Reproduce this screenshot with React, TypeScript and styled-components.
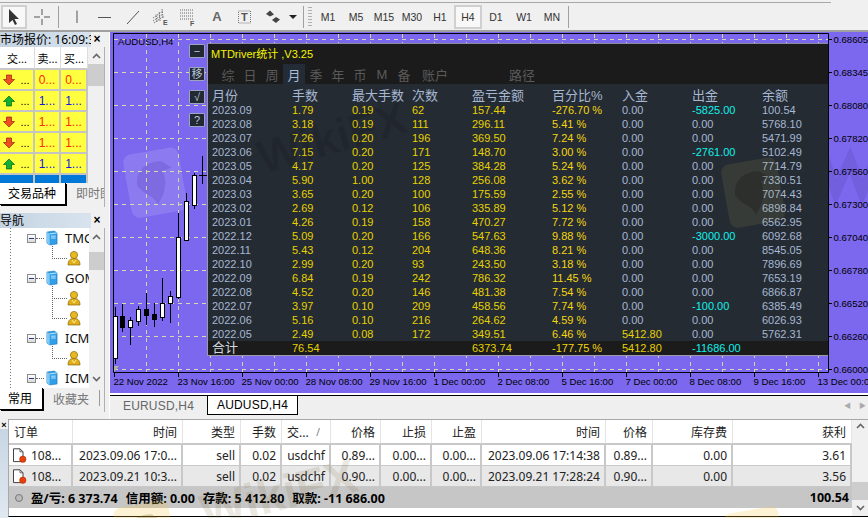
import React from 'react'
import styled, { createGlobalStyle } from 'styled-components'

const UI_FONT = '"Noto Sans", "Noto Sans CJK SC", sans-serif'
const CHART_FONT = '"Liberation Sans", "Noto Sans CJK SC", sans-serif'

const GlobalStyle = createGlobalStyle`
  html, body {
    margin: 0;
    padding: 0;
    background: #f0f0f0;
  }
  * {
    box-sizing: border-box;
  }
`

/* ---------- data ---------- */

const PRICES = [
  ['0.68605', 39], ['0.68345', 72], ['0.68080', 105], ['0.67820', 138], ['0.67560', 171], ['0.67300', 204],
  ['0.67040', 237], ['0.66780', 270], ['0.66520', 303], ['0.66260', 336], ['0.66000', 369],
] as const

const TIMES = [
  '22 Nov 2022', '23 Nov 16:00', '25 Nov 00:00', '28 Nov 08:00', '29 Nov 16:00', '1 Dec 00:00',
  '2 Dec 08:00', '5 Dec 16:00', '7 Dec 00:00', '8 Dec 08:00', '9 Dec 16:00', '13 Dec 00:00',
]

// x, wick top, wick bottom, body top, body bottom, bullish
const CANDLES: [number, number, number, number, number, boolean][] = [
  [115, 307, 364, 316, 358, true],
  [122, 304, 332, 316, 327, false],
  [130, 317, 345, 320, 327, true],
  [138, 306, 326, 309, 321, true],
  [146, 293, 325, 309, 315, false],
  [154, 303, 327, 314, 319, false],
  [162, 278, 321, 303, 317, true],
  [170, 291, 323, 296, 303, true],
  [178, 213, 299, 237, 297, true],
  [186, 193, 241, 201, 240, true],
  [194, 173, 209, 175, 205, true],
]

const MONTHS = [
  ['2023.09', '1.79', '0.19', '62', '157.44', '-276.70 %', '0.00', '-5825.00', '100.54'],
  ['2023.08', '3.18', '0.19', '111', '296.11', '5.41 %', '0.00', '0.00', '5768.10'],
  ['2023.07', '7.26', '0.20', '196', '369.50', '7.24 %', '0.00', '0.00', '5471.99'],
  ['2023.06', '7.15', '0.20', '171', '148.70', '3.00 %', '0.00', '-2761.00', '5102.49'],
  ['2023.05', '4.17', '0.20', '125', '384.28', '5.24 %', '0.00', '0.00', '7714.79'],
  ['2023.04', '5.90', '1.00', '128', '256.08', '3.62 %', '0.00', '0.00', '7330.51'],
  ['2023.03', '3.65', '0.20', '100', '175.59', '2.55 %', '0.00', '0.00', '7074.43'],
  ['2023.02', '2.69', '0.12', '106', '335.89', '5.12 %', '0.00', '0.00', '6898.84'],
  ['2023.01', '4.26', '0.19', '158', '470.27', '7.72 %', '0.00', '0.00', '6562.95'],
  ['2022.12', '5.09', '0.20', '166', '547.63', '9.88 %', '0.00', '-3000.00', '6092.68'],
  ['2022.11', '5.43', '0.12', '204', '648.36', '8.21 %', '0.00', '0.00', '8545.05'],
  ['2022.10', '2.99', '0.20', '93', '243.50', '3.18 %', '0.00', '0.00', '7896.69'],
  ['2022.09', '6.84', '0.19', '242', '786.32', '11.45 %', '0.00', '0.00', '7653.19'],
  ['2022.08', '4.52', '0.20', '146', '481.38', '7.54 %', '0.00', '0.00', '6866.87'],
  ['2022.07', '3.97', '0.10', '209', '458.56', '7.74 %', '0.00', '-100.00', '6385.49'],
  ['2022.06', '5.16', '0.10', '216', '264.62', '4.59 %', '0.00', '0.00', '6026.93'],
  ['2022.05', '2.49', '0.08', '172', '349.51', '6.46 %', '5412.80', '0.00', '5762.31'],
]

const MONTH_HEAD = ['月份', '手数', '最大手数', '次数', '盈亏金额', '百分比%', '入金', '出金', '余额']
const PANEL_TABS = ['综', '日', '周', '月', '季', '年', '币', 'M', '备']
const TIMEFRAMES = ['M1', 'M5', 'M15', 'M30', 'H1', 'H4', 'D1', 'W1', 'MN']

const QUOTES = [
  { up: false, value: '0...' },
  { up: true, value: '1...' },
  { up: false, value: '1...' },
  { up: false, value: '1...' },
  { up: true, value: '1...' },
]

const ORDER_HEAD = ['订单', '时间', '类型', '手数', '交...', '价格', '止损', '止盈', '时间', '价格', '库存费', '获利']
const ORDERS = [
  ['108...', '2023.09.06 17:0...', 'sell', '0.02', 'usdchf', '0.89...', '0.00...', '0.00...', '2023.09.06 17:14:38', '0.89...', '0.00', '3.61'],
  ['108...', '2023.09.21 10:3...', 'sell', '0.02', 'usdchf', '0.90...', '0.00...', '0.00...', '2023.09.21 17:28:24', '0.90...', '0.00', '3.56'],
]

/* ---------- shell ---------- */

const Page = styled.div`
  width: 868px;
  height: 518px;
  overflow: hidden;
  display: flex;
  flex-direction: column;
  background: #f0f0f0;
  font-family: ${UI_FONT};
  color: #000;
`

const Toolbar = styled.div`
  height: 32px;
  flex: none;
  display: flex;
  align-items: center;
  padding-top: 3px;
  position: relative;
  background: #f0f0f0;
  border-bottom: 2px solid #a0a0a0;
  &::before {
    content: '';
    position: absolute;
    left: 0;
    top: 2px;
    width: 831px;
    height: 1px;
    background: #a8a8a8;
  }
`

const ToolButton = styled.div<{ $pressed?: boolean }>`
  width: 28px;
  height: 24px;
  flex: none;
  display: flex;
  align-items: center;
  justify-content: center;
  ${(p) => p.$pressed && 'border: 2px solid #d0d0d0; background: #f8f8f8; margin-left: 1px; margin-right: 1px; width: 26px;'}
`

const ToolSeparator = styled.div`
  width: 1px;
  height: 22px;
  flex: none;
  margin: 0 4px 0 2px;
  background: #a0a0a0;
`

const Grip = styled.div`
  width: 4px;
  height: 20px;
  flex: none;
  margin-right: 2px;
  background: repeating-linear-gradient(to bottom, #b0b0b0 0 1px, transparent 1px 3px);
`

const TimeButton = styled.div<{ $active?: boolean }>`
  width: 28px;
  height: 24px;
  flex: none;
  display: flex;
  align-items: center;
  justify-content: center;
  font-family: ${CHART_FONT};
  font-size: 10.5px;
  color: #333;
  ${(p) => p.$active && 'border: 2px solid #d0d0d0; background: #f8f8f8;'}
`

const Body = styled.div`
  height: 387px;
  flex: none;
  display: flex;
`

const Sidebar = styled.aside`
  width: 110px;
  flex: none;
  display: flex;
  flex-direction: column;
  padding-right: 4px;
  border-right: 1px solid #fff;
`

const PanelHead = styled.div`
  height: 15px;
  flex: none;
  display: flex;
  align-items: center;
  justify-content: space-between;
  font-size: 12.5px;
  line-height: 15px;
  white-space: nowrap;
  padding-right: 2px;
`

const PanelTitle = styled.span`
  width: 92px;
  overflow: hidden;
  background: linear-gradient(to right, #c4d3e2, #d8e3ee);
  font-size: 12px;
`

const CloseMark = styled.span`
  width: 12px;
  text-align: center;
  font-family: ${CHART_FONT};
  font-size: 12px;
  font-weight: 700;
`

/* ---------- market watch ---------- */

const MarketPanel = styled.section`
  height: 136px;
  flex: none;
  display: grid;
  grid-template-columns: 88px 1fr;
  background: #fff;
  border-right: 1px solid #b0b0b0;
  overflow: hidden;
`

const QuoteTable = styled.div`
  display: grid;
  grid-template-columns: 35px 26px 27px;
  grid-auto-rows: 21px;
  grid-template-rows: 23px;
`

const QuoteHead = styled.div`
  display: flex;
  align-items: center;
  justify-content: center;
  font-size: 11px;
  border-right: 1px solid #dcdcdc;
  border-bottom: 2px solid #c8c8c8;
`

const QuoteCell = styled.div<{ $up?: boolean; $selected?: boolean }>`
  display: flex;
  align-items: center;
  justify-content: center;
  gap: 5px;
  background: ${(p) => (p.$selected ? '#0078d7' : '#ffff40')};
  border-right: 2px solid #c4c4c4;
  border-bottom: 2px solid #c4c4c4;
  color: ${(p) => (p.$up ? '#1414e0' : '#ff2a00')};
  font-family: ${CHART_FONT};
  font-size: 12px;
  font-weight: 400;
`

const Dots = styled.span`
  color: #000;
  font-family: ${CHART_FONT};
  font-size: 11px;
`

const Scroll = styled.div`
  display: flex;
  flex-direction: column;
  justify-content: space-between;
  align-items: center;
  background: #f0f0f0;
  position: relative;
  padding: 6px 0;
`

const ScrollThumb = styled.div<{ $top: number; $height: number }>`
  position: absolute;
  left: 0;
  right: 0;
  top: ${(p) => p.$top}px;
  height: ${(p) => p.$height}px;
  background: #cdcdcd;
`

const SideTabs = styled.div`
  height: 24px;
  flex: none;
  display: flex;
  align-items: flex-start;
  overflow: hidden;
  font-size: 12px;
  background: #f0f0f0;
  border-right: 1px solid #b0b0b0;
`

const SideTab = styled.div<{ $active?: boolean; $divider?: boolean; $w: number }>`
  width: ${(p) => p.$w}px;
  height: ${(p) => (p.$active ? 22 : 20)}px;
  flex: none;
  overflow: hidden;
  white-space: nowrap;
  padding: 1px 0 0 ${(p) => (p.$active ? 8 : 10)}px;
  background: ${(p) => (p.$active ? '#fff' : 'transparent')};
  color: ${(p) => (p.$active ? '#000' : '#777')};
  ${(p) => p.$active && 'border-right: 1px solid #000; border-bottom: 1px solid #000; box-shadow: 1px 1px 0 #000;'}
  ${(p) => p.$divider && 'border-right: 1px solid #999; height: 16px; margin-top: 2px; padding-top: 0;'}
`

const Splitter = styled.div`
  height: 6px;
  flex: none;
`

/* ---------- navigator ---------- */

const NavPanel = styled.section`
  height: 160px;
  flex: none;
  display: grid;
  grid-template-columns: 89px 1fr;
  background: #fff;
  border-right: 1px solid #b0b0b0;
  overflow: hidden;
`

const Tree = styled.div`
  overflow: hidden;
  background-image: repeating-linear-gradient(to bottom, #777 0 1px, transparent 1px 3px);
  background-size: 1px 100%;
  background-position: 10px 0;
  background-repeat: no-repeat;
`

const ServerRow = styled.div`
  height: 20px;
  display: flex;
  align-items: center;
  padding-left: 27px;
  font-size: 13px;
  white-space: nowrap;
  svg {
    flex: none;
  }
`

const UserRow = styled.div<{ $tall?: boolean }>`
  height: 20px;
  position: relative;
  padding-left: 67px;
  display: flex;
  align-items: center;
  &::before {
    content: '';
    position: absolute;
    left: 52px;
    bottom: 9px;
    width: 14px;
    height: ${(p) => (p.$tall ? 30 : 12)}px;
    border-left: 1px dotted #666;
    border-bottom: 1px dotted #666;
  }
`

const MinusBox = styled.span`
  width: 9px;
  height: 9px;
  flex: none;
  border: 1px solid #8a8a8a;
  background: linear-gradient(#fff, #d8d8d8);
  display: flex;
  align-items: center;
  justify-content: center;
  &::after {
    content: '';
    width: 5px;
    height: 1px;
    background: #2a3a80;
  }
`

const Connector = styled.span`
  width: 8px;
  flex: none;
  border-top: 1px dotted #666;
  margin-right: 2px;
`

const ServerName = styled.span`
  flex: none;
  margin-left: 7px;
  color: #111;
`

/* ---------- chart ---------- */

const Workspace = styled.main`
  flex: 1;
  min-width: 0;
  display: flex;
  flex-direction: column;
`

const ChartFrame = styled.div`
  height: 361px;
  flex: none;
  position: relative;
  background: #7b68ee;
  overflow: hidden;
`

const ChartSvg = styled.svg`
  display: block;
  text {
    font-family: ${CHART_FONT};
    font-size: 9.6px;
    fill: #000;
  }
`

const SideButtons = styled.div`
  position: absolute;
  left: 79px;
  top: 12px;
  display: flex;
  flex-direction: column;
  gap: 9px;
`

const PanelButton = styled.div`
  width: 16px;
  height: 14px;
  display: flex;
  align-items: center;
  justify-content: center;
  background: #232932;
  border: 1px solid #9aa6c0;
  border-radius: 1px;
  color: #b8c6da;
  font-size: 11px;
  font-family: ${CHART_FONT};
  line-height: 1;
`

const StatsPanel = styled.section`
  position: absolute;
  left: 97px;
  top: 11px;
  width: 621px;
  height: 313px;
  background: #252b33;
  border-left: 1px solid #9a9aa8;
  border-top: 1px solid #8a8aa0;
  border-bottom: 1px solid #9a9aa8;
  font-family: ${CHART_FONT};
  overflow: hidden;
`

const StatsTop = styled.div`
  height: 40px;
  background: #1b1b1b;
  display: flex;
  flex-direction: column;
`

const StatsTitle = styled.div`
  height: 20px;
  padding: 2px 0 0 3px;
  color: #f4f400;
  font-family: ${CHART_FONT};
  font-size: 11px;
  line-height: 16px;
`

const StatsTabs = styled.div`
  height: 20px;
  display: flex;
  padding-left: 9px;
`

const StatsTab = styled.div<{ $active?: boolean; $gap?: number; $w?: number }>`
  width: ${(p) => p.$w ?? 22}px;
  margin-left: ${(p) => p.$gap ?? 0}px;
  flex: none;
  display: flex;
  align-items: center;
  justify-content: center;
  font-size: 13px;
  color: ${(p) => (p.$active ? '#a8bcd8' : '#5a5a5a')};
  background: ${(p) => (p.$active ? '#232c36' : 'transparent')};
`

const MonthRow = styled.div<{ $head?: boolean; $total?: boolean }>`
  height: ${(p) => (p.$head ? 19 : 14)}px;
  display: grid;
  grid-template-columns: 80px 60px 60px 60px 80px 70px 70px 70px 1fr;
  padding-left: 4px;
  align-items: center;
  font-size: ${(p) => (p.$head ? 13 : 11)}px;
  line-height: 14px;
  white-space: nowrap;
  ${(p) => p.$head && 'padding-top: 5px;'}
  ${(p) => p.$total && 'background: #1b1b1b;'}
`

const MonthCell = styled.span<{ $tone: 'label' | 'value' | 'cash' | 'percent' | 'total' }>`
  font-size: ${(p) => (p.$tone === 'total' ? '13px' : 'inherit')};
  color: ${(p) =>
    ({ label: '#a6b8d2', value: '#e6d200', percent: '#f4d610', cash: '#10f0ea', total: '#d0d8e0' })[p.$tone]};
`

const StatsWatermark = styled.svg`
  position: absolute;
  inset: 0;
  pointer-events: none;
  text {
    font-family: ${CHART_FONT};
    font-weight: 700;
    font-size: 46px;
    fill: rgba(0, 0, 0, 0.1);
  }
`

/* ---------- chart tabs ---------- */

const ChartTabs = styled.div`
  height: 24px;
  flex: none;
  margin-top: 2px;
  display: flex;
  align-items: flex-start;
  background: #efefef;
  border-top: 1px solid #000;
  position: relative;
  font-family: ${CHART_FONT};
  font-size: 12px;
  box-shadow: 0 -2px 0 #fff;
`

const ChartTab = styled.div<{ $active?: boolean; $w: number }>`
  width: ${(p) => p.$w}px;
  height: 19px;
  flex: none;
  display: flex;
  align-items: center;
  justify-content: center;
  letter-spacing: 0.2px;
  color: ${(p) => (p.$active ? '#000' : '#666')};
  background: ${(p) => (p.$active ? '#fff' : 'transparent')};
  ${(p) => p.$active && 'border-left: 1px solid #000; border-right: 1px solid #000; border-bottom: 1px solid #000;'}
`

const TabArrows = styled.div`
  margin-left: auto;
  width: 22px;
  margin-right: 2px;
  height: 18px;
  display: flex;
  align-items: center;
  justify-content: space-between;
  color: #aaa;
  font-size: 7px;
`

/* ---------- terminal ---------- */

const Terminal = styled.section`
  flex: 1;
  min-height: 0;
  display: flex;
  position: relative;
  background: #fff;
`

const TerminalSide = styled.div`
  width: 8px;
  flex: none;
  display: flex;
  justify-content: center;
  background: linear-gradient(to bottom, #f0f0f0 0 10px, #c8d6e4 10px, #e0e8f0);
  font-family: ${CHART_FONT};
  font-size: 9px;
  font-weight: 700;
  line-height: 12px;
`

const TerminalMain = styled.div`
  flex: 1;
  min-width: 0;
  display: flex;
  border-top: 1px solid #a8a8a8;
  border-left: 1px solid #a8a8a8;
  border-bottom: 1px solid #000;
  margin-bottom: 1px;
`

const OrderTable = styled.div`
  width: 843px;
  flex: none;
  position: relative;
`

const OrderRow = styled.div<{ $alt?: boolean; $head?: boolean }>`
  height: ${(p) => (p.$head ? 25 : 21)}px;
  display: grid;
  grid-template-columns: 64px 110px 58px 41px 49px 50px 51px 50px 124px 47px 80px 119px;
  background: ${(p) => (p.$alt ? '#e8e8e8' : '#fff')};
  font-size: 12px;
  color: #222;
  border-bottom: ${(p) => (p.$head ? '2px solid #c8c8c8' : '1px solid #c8c8c8')};
`

const OrderCell = styled.div<{ $left?: boolean; $head?: boolean; $first?: boolean }>`
  display: flex;
  align-items: center;
  justify-content: ${(p) => (p.$left ? 'flex-start' : 'flex-end')};
  gap: 4px;
  white-space: nowrap;
  overflow: hidden;
  padding: ${(p) => (p.$left ? '0 0 0 5px' : p.$head ? '0 5px 0 0' : '0 4px 0 0')};
  border-right: ${(p) => (p.$head ? '1px solid #e4e4e4' : '2px solid #c8c8c8')};
  ${(p) => !p.$head && p.$first && 'padding-left: 3px;'}
`

const SortMark = styled.span`
  margin: 0 10px 0 auto;
  color: #777;
  font-size: 10px;
`

const Summary = styled.div`
  height: 21px;
  display: flex;
  align-items: center;
  background: #c6c6c6;
  font-size: 12.5px;
  font-weight: 700;
  padding: 0 3px 0 6px;
  white-space: nowrap;
`

const SummaryDot = styled.span`
  width: 8px;
  height: 8px;
  margin-right: 8px;
  flex: none;
  border-radius: 50%;
  border: 1px solid #777;
  background: #bbb;
`

const SummaryItem = styled.span`
  margin-right: 8px;
`

const SummaryTotal = styled.span`
  margin-left: auto;
`

const TerminalScroll = styled(Scroll)`
  flex: 1;
  padding: 3px 0 5px;
`

const TerminalWatermark = styled.svg`
  position: absolute;
  left: 0;
  top: 0;
  pointer-events: none;
  text {
    font-family: ${CHART_FONT};
    font-weight: 700;
    font-size: 48px;
    fill: rgba(120, 100, 60, 0.14);
  }
`

/* ---------- drawings ---------- */

function ScrollArrow({ down }: { down?: boolean }) {
  return (
    <svg width="9" height="6" viewBox="0 0 9 6">
      <path d={down ? 'M1 1 L4.5 4.5 L8 1' : 'M1 5 L4.5 1.5 L8 5'} fill="none" stroke="#666" strokeWidth="1.6" />
    </svg>
  )
}

function ArrowIcon({ up }: { up: boolean }) {
  const fill = up ? '#10b030' : '#f05020'
  const edge = up ? '#056018' : '#902010'
  return (
    <svg width="12" height="12" viewBox="0 0 12 12">
      {up ? (
        <path d="M6 1 L11.5 6.5 H8.5 V11 H3.5 V6.5 H.5 Z" fill={fill} stroke={edge} strokeWidth=".7" />
      ) : (
        <path d="M6 11 L11.5 5.5 H8.5 V1 H3.5 V5.5 H.5 Z" fill={fill} stroke={edge} strokeWidth=".7" />
      )}
    </svg>
  )
}

function ServerIcon() {
  return (
    <svg width="12" height="16" viewBox="0 0 13 17">
      <path d="M1 2 L9 1 L12 3 V15 L4 16 L1 14 Z" fill="#2f9fe8" stroke="#1670b8" strokeWidth=".6" />
      <path d="M1 2 L4 4 V16 L1 14 Z" fill="#7fc8f4" />
      <path d="M4 4 L12 3 M5.5 6.5 H10.5 M5.5 8.5 H10.5" stroke="#d8f0ff" strokeWidth=".9" />
    </svg>
  )
}

function UserIcon() {
  return (
    <svg width="14" height="16" viewBox="0 0 14 16">
      <circle cx="7" cy="5" r="3.6" fill="#e8b820" stroke="#8a6a10" strokeWidth=".7" />
      <path d="M1 15 C1 9.5 4 8.5 7 8.5 C10 8.5 13 9.5 13 15 Z" fill="#e0ae18" stroke="#8a6a10" strokeWidth=".7" />
      <path d="M5 10 L7 13 L9 10" fill="none" stroke="#fff2a0" strokeWidth=".9" />
    </svg>
  )
}

function OrderIcon() {
  return (
    <svg width="15" height="15" viewBox="0 0 15 15" style={{ flex: 'none' }}>
      <path d="M1.5 .8 H8 L11 3.8 V13.6 H1.5 Z" fill="#fff" stroke="#444" strokeWidth="1" />
      <path d="M8 .8 V3.8 H11" fill="none" stroke="#444" strokeWidth=".8" />
      <circle cx="10.8" cy="11.2" r="3.2" fill="#e8400c" stroke="#a02800" strokeWidth=".5" />
    </svg>
  )
}

function LogoMark({ x, y, fill, bird }: { x: number; y: number; fill: string; bird: string }) {
  return (
    <g transform={`translate(${x} ${y}) rotate(-10)`}>
      <rect width="56" height="64" rx="8" fill={fill} />
      <path
        d="M10 32 C10 16 24 9 38 12 L47 20 L37 22 C41 30 37 44 27 54 C24 44 15 42 10 32 Z"
        fill={bird}
      />
    </g>
  )
}

function Tools() {
  const s = { stroke: '#555', strokeWidth: 1, fill: 'none' }
  return (
    <>
      <ToolButton $pressed>
        <svg width="14" height="18" viewBox="0 0 14 18">
          <path d="M2 1 V15 L5.5 12 L8 17 L10 16 L7.5 11 H12 Z" fill="#333" />
        </svg>
      </ToolButton>
      <ToolButton>
        <svg width="18" height="18" viewBox="0 0 18 18">
          <path d="M9 1 V7 M9 11 V17 M1 9 H7 M11 9 H17" {...s} />
        </svg>
      </ToolButton>
      <ToolSeparator />
      <ToolButton>
        <svg width="14" height="16" viewBox="0 0 14 16">
          <path d="M7 1.5 V14" {...s} />
        </svg>
      </ToolButton>
      <ToolButton>
        <svg width="16" height="14" viewBox="0 0 16 14">
          <path d="M1 7.5 H14" {...s} />
        </svg>
      </ToolButton>
      <ToolButton>
        <svg width="16" height="16" viewBox="0 0 16 16">
          <path d="M2 15 L14 2" {...s} />
        </svg>
      </ToolButton>
      <ToolButton>
        <svg width="20" height="18" viewBox="0 0 20 18">
          <path d="M2 10 L12 3 M2 13 L12 6 M3 15 L13 8 M6 14 L5 6 M9 13 L8 3 M12 10 L11 1" stroke="#666" strokeWidth=".9" strokeDasharray="1.5 1" fill="none" />
          <text x="12" y="17" fontSize="7" fontFamily="Liberation Sans" fontWeight="700" fill="#555">E</text>
        </svg>
      </ToolButton>
      <ToolButton>
        <svg width="20" height="18" viewBox="0 0 20 18">
          <path d="M1 2 H14 M1 5 H14 M1 8 H14 M1 11 H14" stroke="#666" strokeDasharray="1 1" fill="none" />
          <text x="11" y="17.5" fontSize="7" fontFamily="Liberation Sans" fontWeight="700" fill="#555">F</text>
        </svg>
      </ToolButton>
      <ToolButton>
        <span style={{ fontFamily: CHART_FONT, fontWeight: 700, fontSize: 13, color: '#666' }}>A</span>
      </ToolButton>
      <ToolButton>
        <svg width="16" height="16" viewBox="0 0 16 16">
          <rect x="1.5" y="2" width="12" height="12" fill="none" stroke="#777" strokeDasharray="1 1" />
          <text x="4" y="12" fontSize="11" fontFamily="Liberation Sans" fontWeight="700" fill="#555">T</text>
        </svg>
      </ToolButton>
      <ToolButton>
        <svg width="16" height="14" viewBox="0 0 16 14">
          <path d="M5 0.5 L9 4.5 L5 6.5 L1 4 Z" fill="#444" />
          <path d="M11 7 L15 9.5 L11 13 L7 10 Z" fill="#444" />
        </svg>
      </ToolButton>
    </>
  )
}

function Chart() {
  const axisX = 828
  const axisY = 372
  return (
    <ChartSvg width="758" height="361" viewBox="110 32 758 361">
      <LogoMark x={122} y={156} fill="rgba(255,255,255,.13)" bird="rgba(90,70,190,.28)" />
      <path d="M822 152 L836 192 L850 160 L862 192 L880 150" fill="none" stroke="rgba(60,40,130,.14)" strokeWidth="10" />
      {PRICES.map(([, y]) => (
        <line key={y} x1="114" x2={axisX} y1={y + 0.5} y2={y + 0.5} stroke="#dcd9b0" strokeDasharray="4 4" />
      ))}
      {Array.from({ length: 22 }, (_, i) => 146 + i * 32).map((x) => (
        <line key={x} x1={x + 0.5} x2={x + 0.5} y1="34" y2={axisY} stroke="#d6d4a0" strokeDasharray="4 4" />
      ))}
      {CANDLES.map(([x, top, bottom, bodyTop, bodyBottom, up]) => (
        <g key={x}>
          <line x1={x + 0.5} x2={x + 0.5} y1={top} y2={bottom} stroke="#000" />
          <rect
            x={x - 1.5}
            y={bodyTop + 0.5}
            width="4"
            height={bodyBottom - bodyTop}
            fill={up ? '#fff' : '#000'}
            stroke="#000"
          />
        </g>
      ))}
      <path d="M202.5 156 V184 M199 175.5 H207" stroke="#000" fill="none" />
      <path d={`M113.5 33.5 H${axisX}.5 V${axisY}.5 H113.5 Z`} fill="none" stroke="#000" />
      <path d="M114 372 V366 H119 Z" fill="#b0b0a0" />
      {PRICES.map(([label, y]) => (
        <g key={label}>
          <line x1={axisX} x2={axisX + 4} y1={y + 0.5} y2={y + 0.5} stroke="#000" />
          <text x="833.5" y={y + 3.5}>{label}</text>
        </g>
      ))}
      {TIMES.map((label, i) => (
        <g key={label}>
          <line x1={178.5 + (i - 1) * 64} x2={178.5 + (i - 1) * 64} y1={axisY} y2={axisY + 5} stroke="#000" />
          <text x={113.5 + i * 64} y="385">{label}</text>
        </g>
      ))}
      <text x="118" y="45">AUDUSD,H4</text>
    </ChartSvg>
  )
}

function StatsTable() {
  return (
    <StatsPanel>
      <StatsWatermark width="621" height="313" viewBox="0 0 621 313">
        <text x="55" y="130" transform="rotate(-16 55 130)">WikiFX</text>
        <LogoMark x={512} y={122} fill="rgba(180,170,90,.13)" bird="rgba(0,0,0,.2)" />
      </StatsWatermark>
      <StatsTop>
        <StatsTitle>MTDriver统计 ,V3.25</StatsTitle>
        <StatsTabs>
          {PANEL_TABS.map((t) => (
            <StatsTab key={t} $active={t === '月'}>{t}</StatsTab>
          ))}
          <StatsTab $w={44} $gap={-2}>账户</StatsTab>
          <StatsTab $w={44} $gap={43}>路径</StatsTab>
        </StatsTabs>
      </StatsTop>
      <MonthRow $head>
        {MONTH_HEAD.map((h) => (
          <MonthCell key={h} $tone="label">{h}</MonthCell>
        ))}
      </MonthRow>
      {MONTHS.map((row) => (
        <MonthRow key={row[0]}>
          {row.map((cell, i) => {
            let tone: 'label' | 'value' | 'cash' | 'percent' = i >= 1 && i <= 4 ? 'value' : 'label'
            if (i === 5) tone = 'percent'
            if (i === 6 && cell !== '0.00') tone = 'value'
            if (i === 7 && cell !== '0.00') tone = 'cash'
            return <MonthCell key={i} $tone={tone}>{cell}</MonthCell>
          })}
        </MonthRow>
      ))}
      <MonthRow $total>
        <MonthCell $tone="total">合计</MonthCell>
        <MonthCell $tone="value">76.54</MonthCell>
        <span />
        <span />
        <MonthCell $tone="value">6373.74</MonthCell>
        <MonthCell $tone="percent">-177.75 %</MonthCell>
        <MonthCell $tone="value">5412.80</MonthCell>
        <MonthCell $tone="cash">-11686.00</MonthCell>
        <span />
      </MonthRow>
    </StatsPanel>
  )
}

function MarketWatch() {
  return (
    <>
      <PanelHead>
        <PanelTitle>市场报价: 16:09:3</PanelTitle>
        <CloseMark>×</CloseMark>
      </PanelHead>
      <MarketPanel>
        <QuoteTable>
          <QuoteHead>交...</QuoteHead>
          <QuoteHead>卖...</QuoteHead>
          <QuoteHead>买...</QuoteHead>
          {QUOTES.map((q, i) => (
            <React.Fragment key={i}>
              <QuoteCell>
                <ArrowIcon up={q.up} />
                <Dots>...</Dots>
              </QuoteCell>
              <QuoteCell $up={q.up}>{q.value}</QuoteCell>
              <QuoteCell $up={q.up}>{q.value}</QuoteCell>
            </React.Fragment>
          ))}
          <QuoteCell $selected />
          <QuoteCell $selected />
          <QuoteCell $selected />
        </QuoteTable>
        <Scroll>
          <ScrollArrow />
          <ScrollThumb $top={17} $height={22} />
          <ScrollArrow down />
        </Scroll>
      </MarketPanel>
      <SideTabs>
        <SideTab $active $w={66}>交易品种</SideTab>
        <SideTab $w={39}>即时图表</SideTab>
      </SideTabs>
    </>
  )
}

function Navigator() {
  return (
    <>
      <PanelHead>
        <PanelTitle>导航</PanelTitle>
        <CloseMark>×</CloseMark>
      </PanelHead>
      <NavPanel>
        <Tree>
          <ServerRow><MinusBox /><Connector /><ServerIcon /><ServerName>TMGM</ServerName></ServerRow>
          <UserRow><UserIcon /></UserRow>
          <ServerRow><MinusBox /><Connector /><ServerIcon /><ServerName>GOMarkets</ServerName></ServerRow>
          <UserRow><UserIcon /></UserRow>
          <UserRow $tall><UserIcon /></UserRow>
          <ServerRow><MinusBox /><Connector /><ServerIcon /><ServerName>ICMarkets</ServerName></ServerRow>
          <UserRow><UserIcon /></UserRow>
          <ServerRow><MinusBox /><Connector /><ServerIcon /><ServerName>ICMarkets</ServerName></ServerRow>
        </Tree>
        <Scroll>
          <ScrollArrow />
          <ScrollThumb $top={24} $height={18} />
          <ScrollArrow down />
        </Scroll>
      </NavPanel>
      <SideTabs>
        <SideTab $active $w={43}>常用</SideTab>
        <SideTab $divider $w={57}>收藏夹</SideTab>
      </SideTabs>
    </>
  )
}

export default function App() {
  return (
    <Page>
      <GlobalStyle />
      <Toolbar>
        <Tools />
        <svg width="8" height="6" viewBox="0 0 8 6" style={{ marginRight: 4, marginLeft: 2 }}>
          <path d="M0 1 H8 L4 5 Z" fill="#222" />
        </svg>
        <ToolSeparator />
        <Grip />
        {TIMEFRAMES.map((t) => (
          <TimeButton key={t} $active={t === 'H4'}>{t}</TimeButton>
        ))}
        <ToolSeparator />
      </Toolbar>
      <Body>
        <Sidebar>
          <MarketWatch />
          <Splitter />
          <Navigator />
        </Sidebar>
        <Workspace>
          <ChartFrame>
            <Chart />
            <SideButtons>
              <PanelButton>−</PanelButton>
              <PanelButton>移</PanelButton>
              <PanelButton>√</PanelButton>
              <PanelButton>?</PanelButton>
            </SideButtons>
            <StatsTable />
          </ChartFrame>
          <ChartTabs>
            <ChartTab $w={97}>EURUSD,H4</ChartTab>
            <ChartTab $active $w={91}>AUDUSD,H4</ChartTab>
            <TabArrows>
              <span>◀</span>
              <span>▶</span>
            </TabArrows>
          </ChartTabs>
        </Workspace>
      </Body>
      <Terminal>
        <TerminalSide>×</TerminalSide>
        <TerminalMain>
          <OrderTable>
            <OrderRow $head>
              {ORDER_HEAD.map((h, i) => (
                <OrderCell key={i} $head $first={i === 0} $left={i === 0 || i === 4}>
                  {h}
                  {i === 4 && <SortMark>/</SortMark>}
                </OrderCell>
              ))}
            </OrderRow>
            {ORDERS.map((row, r) => (
              <OrderRow key={r} $alt={r === 1}>
                {row.map((cell, i) => (
                  <OrderCell key={i} $first={i === 0} $left={i === 0}>
                    {i === 0 && <OrderIcon />}
                    {cell}
                  </OrderCell>
                ))}
              </OrderRow>
            ))}
            <Summary>
              <SummaryDot />
              <SummaryItem>盈/亏: 6 373.74</SummaryItem>
              <SummaryItem>信用额: 0.00</SummaryItem>
              <SummaryItem>存款: 5 412.80</SummaryItem>
              <SummaryItem>取款: -11 686.00</SummaryItem>
              <SummaryTotal>100.54</SummaryTotal>
            </Summary>
          </OrderTable>
          <TerminalScroll>
            <ScrollArrow />
            <ScrollThumb $top={62} $height={18} />
            <ScrollArrow down />
          </TerminalScroll>
        </TerminalMain>
        <TerminalWatermark width="868" height="99" viewBox="0 0 868 99">
          <text x="205" y="110" transform="rotate(-14 205 110)">WikiFX</text>
          <LogoMark x={112} y={90} fill="rgba(245,200,60,.22)" bird="rgba(120,90,20,.25)" />
          <LogoMark x={722} y={96} fill="rgba(245,200,60,.22)" bird="rgba(120,90,20,.25)" />
        </TerminalWatermark>
      </Terminal>
    </Page>
  )
}
